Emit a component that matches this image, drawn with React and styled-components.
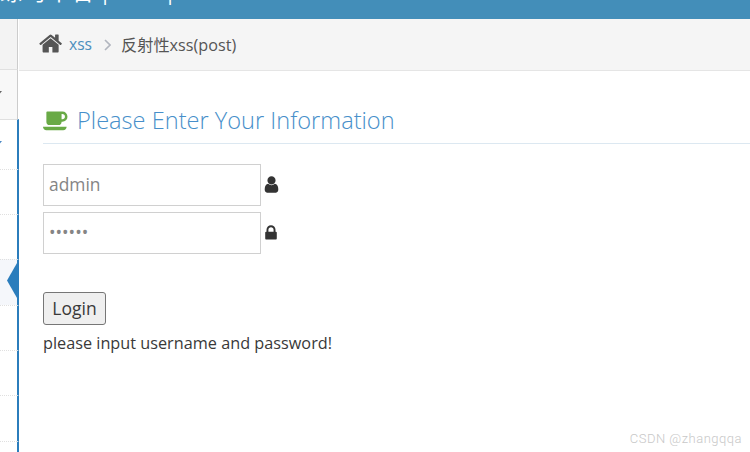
import styled, { createGlobalStyle } from 'styled-components';

const GlobalStyle = createGlobalStyle`
    html, body {
        margin: 0;
        padding: 0;
        background: #fff;
        font-family: "Open Sans", "Noto Sans CJK SC", sans-serif;
    }
`;

const Page = styled.div`
    position: relative;
    width: 750px;
    height: 452px;
    overflow: hidden;
    display: flex;
    flex-direction: column;
`;

// only the bottom of the brand text shows, the rest is scrolled off the top
const Navbar = styled.header`
    flex: none;
    height: 19px;
    overflow: hidden;
    display: flex;
    align-items: flex-start;
    background: #438eb9;
    color: #fff;
    font-family: "Noto Sans CJK SC", sans-serif;
    font-size: 22px;
    line-height: 22px;
    white-space: nowrap;
`;

const Brand = styled.span`
    display: block;
    margin-top: -21px;
    letter-spacing: 2px;
`;

const BrandDivider = styled.span`
    display: block;
    margin-top: -20px;
    margin-left: ${(p) => p.$gap}px;
    font-family: "Open Sans", sans-serif;
`;

const Body = styled.div`
    flex: 1;
    display: flex;
    min-height: 0;
`;

const Sidebar = styled.nav`
    flex: none;
    width: 19px;
    box-sizing: border-box;
    display: flex;
    flex-direction: column;
`;

const SideRow = styled.div`
    position: relative;
    flex: none;
    box-sizing: border-box;
    height: ${(p) => p.$h}px;
    background: ${(p) => p.$bg};
    border-top: 1px ${(p) => p.$line} #e0e0e0;
    border-right: ${(p) => (p.$blue ? '2px solid #2b7dbc' : '1px solid #ccc')};
    margin-right: ${(p) => (p.$blue ? '0' : '1px')};
`;

const Caret = styled.i`
    position: absolute;
    left: -3px;
    top: 21px;
    width: 5px;
    height: 3px;
    background: ${(p) => p.$color};
    clip-path: polygon(0 0, 100% 0, 50% 100%);
`;

const ActiveArrow = styled.i`
    position: absolute;
    right: 0;
    top: 3px;
    width: 10px;
    height: 35px;
    background: #2b7dbc;
    clip-path: polygon(100% 0, 100% 100%, 0 50%);
`;

const Main = styled.main`
    flex: 1;
    min-width: 0;
    display: flex;
    flex-direction: column;
`;

const Breadcrumbs = styled.div`
    flex: none;
    box-sizing: border-box;
    height: 52px;
    display: flex;
    align-items: center;
    padding: 0 0 2px 20px;
    background: #f5f5f5;
    border-bottom: 1px solid #e5e5e5;
    font-size: 16.2px;
    color: #555;
`;

const CrumbLink = styled.a`
    margin-left: 5px;
    font-size: 15.6px;
    color: #4c8fbd;
`;

const CrumbChevron = styled.svg`
    width: 7px;
    height: 12px;
    margin: 3px 10px 0 12px;
`;

const Content = styled.div`
    flex: 1;
    padding: 32px 0 0 24px;
    color: #393939;
`;

const Heading = styled.h3`
    margin: 0 0 20px;
    height: 41px;
    box-sizing: border-box;
    display: flex;
    align-items: flex-start;
    gap: 7px;
    border-bottom: 1px solid #dce8f1;
    font-size: 23.6px;
    line-height: 34px;
    font-weight: 300;
    color: #478fca;
`;

const Field = styled.div`
    display: flex;
    align-items: center;
    gap: 1px;
    margin-bottom: 6px;
`;

const TextInput = styled.input`
    box-sizing: border-box;
    width: 218px;
    height: 42px;
    padding: 0 5px 2px;
    border: 1px solid #d0d0d0;
    outline: none;
    background: #fff;
    font-family: "Open Sans", sans-serif;
    font-size: 17.4px;
    color: #858585;

    &::placeholder {
        color: #858585;
        opacity: 1;
    }
`;

const LoginButton = styled.button`
    display: block;
    box-sizing: border-box;
    width: 63px;
    height: 33px;
    margin-top: 38px;
    padding: 0 0 2px;
    border: 1px solid #767676;
    border-radius: 3px;
    background: #efefef;
    font-family: "Open Sans", sans-serif;
    font-size: 17.5px;
    color: #393939;
`;

const Notice = styled.p`
    margin: 6px 0 0;
    font-size: 16.25px;
    line-height: 24px;
    color: #393939;
`;

const Watermark = styled.span`
    position: absolute;
    right: 8px;
    bottom: 5px;
    font-family: "Roboto", sans-serif;
    font-weight: 300;
    font-size: 13px;
    line-height: 16px;
    letter-spacing: 0.5px;
    color: #c8c8c8;
`;

const HomeIcon = () => (
    <svg width="25" height="25" viewBox="0 0 1792 1792" fill="#555">
        <path d="M1408 992v480q0 26-19 45t-45 19h-384v-384h-256v384h-384q-26 0-45-19t-19-45v-480q0-1 .5-3t.5-3l575-474 575 474q1 2 1 6zm223-69l-62 74q-8 9-21 11h-3q-13 0-21-7l-692-577-692 577q-12 8-24 7-13-2-21-11l-62-74q-8-10-7-23.5t11-21.5l719-599q32-26 76-26t76 26l244 204v-195q0-14 9-23t23-9h192q14 0 23 9t9 23v408l219 182q10 8 11 21.5t-7 23.5z" />
    </svg>
);

const CoffeeIcon = () => (
    <svg width="27" height="24" viewBox="0 0 2048 1792" fill="#69aa46" style={{ marginTop: 5 }}>
        <path d="M1664 640q0-80-56-136t-136-56h-64v384h64q80 0 136-56t56-136zm-1664 768h1792q0 106-75 181t-181 75h-1280q-106 0-181-75t-75-181zm1856-768q0 159-112.5 271.5t-271.5 112.5h-64v32q0 92-66 158t-158 66h-704q-92 0-158-66t-66-158v-736q0-26 19-45t45-19h1152q159 0 271.5 112.5t112.5 271.5z" />
    </svg>
);

const UserIcon = () => (
    <svg width="19" height="19" viewBox="0 0 1792 1792" fill="#333" style={{ marginBottom: 2 }}>
        <path d="M1536 1399q0 109-62.5 187t-150.5 78h-854q-88 0-150.5-78t-62.5-187q0-85 8.5-160.5t31.5-152 58.5-131 94-89 134.5-34.5q131 128 313 128t313-128q76 0 134.5 34.5t94 89 58.5 131 31.5 152 8.5 160.5zm-256-887q0 159-112.5 271.5t-271.5 112.5-271.5-112.5-112.5-271.5 112.5-271.5 271.5-112.5 271.5 112.5 112.5 271.5z" />
    </svg>
);

const LockIcon = () => (
    <svg width="18" height="18" viewBox="0 0 1792 1792" fill="#333">
        <path d="M640 768h512v-192q0-106-75-181t-181-75-181 75-75 181v192zm832 96v576q0 40-28 68t-68 28h-960q-40 0-68-28t-28-68v-576q0-40 28-68t68-28h32v-192q0-184 132-316t316-132 316 132 132 316v192h32q40 0 68 28t28 68z" />
    </svg>
);

const sideRows = [
    { h: 50, bg: '#f3f3f3', line: 'none' },
    { h: 50, bg: '#f8f8f8', line: 'solid', caret: '#666' },
    { h: 50, bg: '#fff', line: 'solid', blue: true, caret: '#4b88c4' },
    { h: 45, bg: '#fff', line: 'dotted', blue: true },
    { h: 45, bg: '#fff', line: 'dotted', blue: true },
    { h: 46, bg: '#f5f7fb', line: 'dotted', blue: true, active: true },
    { h: 45, bg: '#fff', line: 'dotted', blue: true },
    { h: 45, bg: '#fff', line: 'dotted', blue: true },
    { h: 46, bg: '#fff', line: 'dotted', blue: true },
    { h: 11, bg: '#fff', line: 'dotted', blue: true },
];

export default function App() {
    return (
        <Page>
            <GlobalStyle />
            <Navbar>
                <Brand>练习平台</Brand>
                <BrandDivider $gap={3}>|</BrandDivider>
                <BrandDivider $gap={53}>|</BrandDivider>
            </Navbar>
            <Body>
                <Sidebar>
                    {sideRows.map((row, i) => (
                        <SideRow key={i} $h={row.h} $bg={row.bg} $line={row.line} $blue={row.blue}>
                            {row.caret && <Caret $color={row.caret} />}
                            {row.active && <ActiveArrow />}
                        </SideRow>
                    ))}
                </Sidebar>
                <Main>
                    <Breadcrumbs>
                        <HomeIcon />
                        <CrumbLink>xss</CrumbLink>
                        <CrumbChevron viewBox="0 0 7 12" fill="none" stroke="#b2b6bf" strokeWidth="1.6">
                            <path d="M1 1l5 5-5 5" />
                        </CrumbChevron>
                        <span>反射性xss(post)</span>
                    </Breadcrumbs>
                    <Content>
                        <Heading>
                            <CoffeeIcon />
                            Please Enter Your Information
                        </Heading>
                        <Field>
                            <TextInput type="text" placeholder="admin" />
                            <UserIcon />
                        </Field>
                        <Field>
                            <TextInput type="password" defaultValue="123456" />
                            <LockIcon />
                        </Field>
                        <LoginButton>Login</LoginButton>
                        <Notice>please input username and password!</Notice>
                    </Content>
                </Main>
            </Body>
            <Watermark>CSDN @zhangqqa</Watermark>
        </Page>
    );
}
